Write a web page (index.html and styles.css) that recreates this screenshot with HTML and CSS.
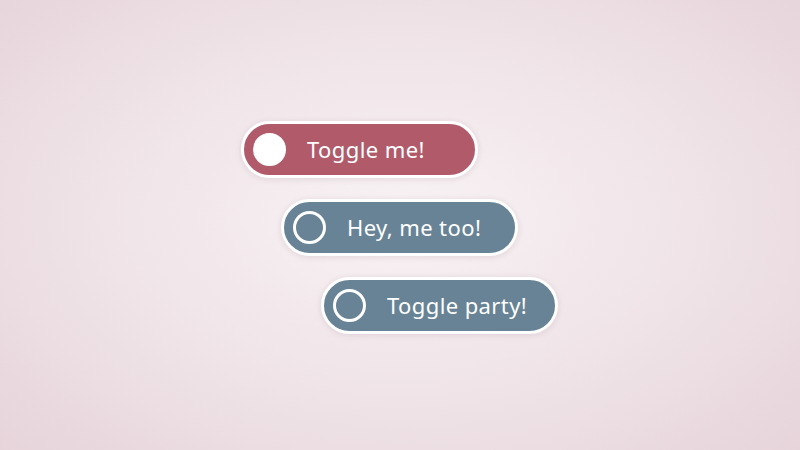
FILE: index.html
```html
<!DOCTYPE html>
<html>
<head>
<meta charset="utf-8">
<link rel="stylesheet" href="styles.css">
</head>
<body>
<main class="stage">
  <div class="list">
    <button class="toggle on step0"><span class="knob"></span><span class="label">Toggle me!</span></button>
    <button class="toggle step1"><span class="knob"></span><span class="label">Hey, me too!</span></button>
    <button class="toggle step2"><span class="knob"></span><span class="label">Toggle party!</span></button>
  </div>
</main>
</body>
</html>
```
FILE: styles.css
```css
html, body {
  margin: 0;
  padding: 0;
  width: 800px;
  height: 450px;
  overflow: hidden;
}
.stage {
  width: 800px;
  height: 450px;
  background: radial-gradient(ellipse 70% 75% at 50% 48%, #f8f2f4 0%, #efe3e7 55%, #e6d4da 100%);
  display: flex;
  box-sizing: border-box;
  padding: 121px 0 0 241px;
}
.list {
  display: flex;
  flex-direction: column;
  align-items: flex-start;
  gap: 21px;
}
.toggle {
  width: 237px;
  height: 57px;
  box-sizing: border-box;
  border: 3px solid #ffffff;
  border-radius: 29px;
  background: #688396;
  color: #ffffff;
  display: flex;
  align-items: center;
  padding: 0 0 0 9px;
  gap: 21px;
  font-family: "Noto Sans", "Open Sans", sans-serif;
  font-size: 22px;
  letter-spacing: 0.4px;
  box-shadow: 0 1px 6px rgba(80, 40, 55, 0.12);
  cursor: pointer;
}
.toggle.on {
  background: #b05a6a;
}
.step1 { margin-left: 40px; }
.step2 { margin-left: 80px; }
.knob {
  width: 33px;
  height: 33px;
  box-sizing: border-box;
  border: 3px solid #ffffff;
  border-radius: 50%;
  flex: none;
}
.toggle.on .knob {
  background: #ffffff;
}
.label {
  line-height: 1;
  position: relative;
  top: -1px;
}
```
